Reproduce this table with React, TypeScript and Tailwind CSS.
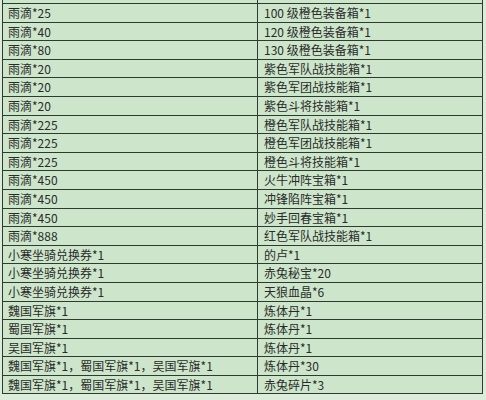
const rows: [string, string][] = [
  ["雨滴*25", "100 级橙色装备箱*1"],
  ["雨滴*40", "120 级橙色装备箱*1"],
  ["雨滴*80", "130 级橙色装备箱*1"],
  ["雨滴*20", "紫色军队战技能箱*1"],
  ["雨滴*20", "紫色军团战技能箱*1"],
  ["雨滴*20", "紫色斗将技能箱*1"],
  ["雨滴*225", "橙色军队战技能箱*1"],
  ["雨滴*225", "橙色军团战技能箱*1"],
  ["雨滴*225", "橙色斗将技能箱*1"],
  ["雨滴*450", "火牛冲阵宝箱*1"],
  ["雨滴*450", "冲锋陷阵宝箱*1"],
  ["雨滴*450", "妙手回春宝箱*1"],
  ["雨滴*888", "红色军队战技能箱*1"],
  ["小寒坐骑兑换券*1", "的卢*1"],
  ["小寒坐骑兑换券*1", "赤兔秘宝*20"],
  ["小寒坐骑兑换券*1", "天狼血晶*6"],
  ["魏国军旗*1", "炼体丹*1"],
  ["蜀国军旗*1", "炼体丹*1"],
  ["吴国军旗*1", "炼体丹*1"],
  ["魏国军旗*1，蜀国军旗*1，吴国军旗*1", "炼体丹*30"],
  ["魏国军旗*1，蜀国军旗*1，吴国军旗*1", "赤兔碎片*3"],
];

export default function App() {
  return (
    <div
      className="w-[486px] h-[400px] overflow-hidden bg-[#dcecda] pl-[2px] pr-[3px]"
      style={{ fontFamily: '"Noto Sans CJK SC", "Liberation Sans", sans-serif' }}
    >
      <div className="bg-[#cde6cb] border-x-[1.5px] border-[#2f3b2f]">
        <div className="h-[3px] flex">
          <div className="w-[255px] border-r-[1.5px] border-[#2f3b2f]" />
          <div className="flex-1" />
        </div>
        {rows.map(([left, right], i) => (
          <div key={i} className="flex h-[18.6px] border-t-[1.5px] border-[#2f3b2f] text-[12px] leading-[17px] text-[#2a2a2a]">
            <div className="w-[255px] pl-[5px] border-r-[1.5px] border-[#2f3b2f] whitespace-nowrap overflow-hidden">
              {left}
            </div>
            <div className="flex-1 pl-[6px] whitespace-nowrap overflow-hidden">{right}</div>
          </div>
        ))}
        <div className="border-t-[1.5px] border-[#2f3b2f]" />
      </div>
    </div>
  );
}
